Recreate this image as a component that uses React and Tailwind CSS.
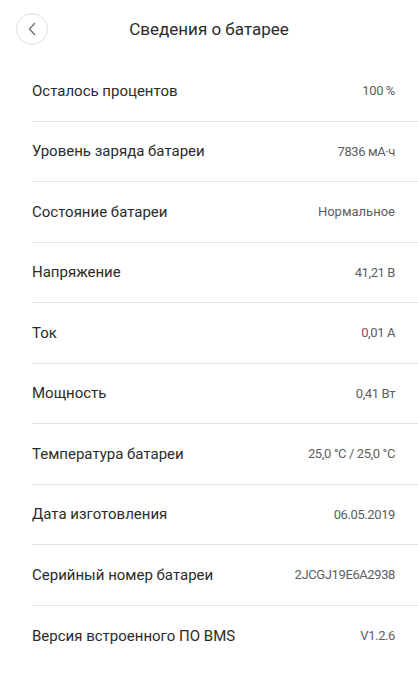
const ROWS = [
  ['Осталось процентов', '100 %'],
  ['Уровень заряда батареи', '7836 мА·ч'],
  ['Состояние батареи', 'Нормальное', true],
  ['Напряжение', '41,21 В'],
  ['Ток', '0,01 А'],
  ['Мощность', '0,41 Вт'],
  ['Температура батареи', '25,0 °C / 25,0 °C'],
  ['Дата изготовления', '06.05.2019'],
  ['Серийный номер батареи', '2JCGJ19E6A2938'],
  ['Версия встроенного ПО BMS', 'V1.2.6'],
]

export default function App() {
  return (
    <div className="min-h-[699px] w-[418px] bg-white font-['Roboto',sans-serif] text-[#333]">
      {/* Header */}
      <div className="relative flex h-[61px] items-center justify-center">
        <button className="absolute left-[16px] top-[13px] flex h-[32px] w-[32px] items-center justify-center rounded-full border border-[#dedede]">
          <svg width="10" height="14" viewBox="0 0 10 14" fill="none">
            <path d="M7.5 1.5 2.5 7l5 5.5" stroke="#7a7a7a" strokeWidth="1.6" strokeLinecap="round" strokeLinejoin="round" />
          </svg>
        </button>
        <h1 className="-mt-[2px] text-[17px] font-normal text-[#2b2b2b]">Сведения о батарее</h1>
      </div>

      {/* Rows */}
      <div className="pl-[32px]">
        {ROWS.map(([label, value, wide], i) => (
          <div
            key={label}
            className={`flex h-[60.5px] items-center justify-between pr-[23px] ${
              i < ROWS.length - 1 ? 'border-b border-[#e4e4e4]' : ''
            }`}
          >
            <span className="text-[15px] text-[#2b2b2b]">{label}</span>
            <span
              className={`text-[13px] text-[#5e5e5e] ${wide ? 'tracking-normal' : 'tracking-[-0.4px]'}`}
            >
              {value}
            </span>
          </div>
        ))}
      </div>
    </div>
  )
}
